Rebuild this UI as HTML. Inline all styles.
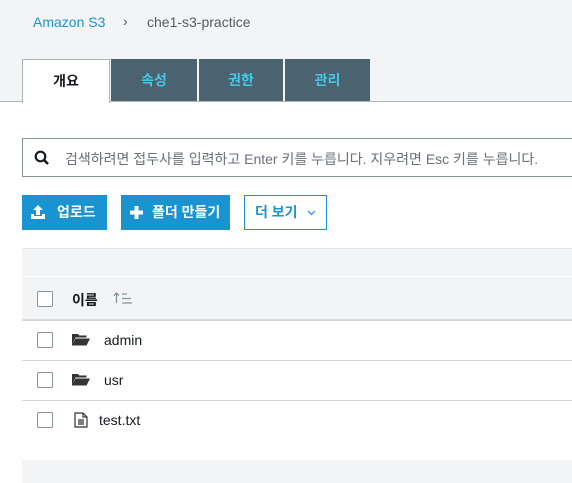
<html><head><style>
body{margin:0;width:572px;height:483px;overflow:hidden;background:#fff;font-family:"Liberation Sans","Noto Sans CJK KR",sans-serif;position:relative}
.a{position:absolute}
.top{left:0;top:0;width:572px;height:101px;background:#f2f4f5;border-bottom:1px solid #aab7b8}
.tab{top:59px;height:42px;background:#4b6270;color:#44c8e8;font-weight:bold;font-size:14px;text-align:center;line-height:42px}
.btn{top:195px;height:35px;background:#1a94d0;color:#fff;font-size:14px;line-height:35px;font-weight:bold}
.cb{width:14px;height:14px;border:1px solid #879596;border-radius:2px;left:37px}
.row{left:22px;width:550px;height:40px;border-bottom:1px solid #d5dbdb}
.t{font-size:14px;color:#16191f}
</style></head><body>
<div class="a top"></div>
<div class="a" style="left:33px;top:14px;font-size:14px;color:#1a94d0">Amazon S3</div>
<div class="a" style="left:123px;top:13px;font-size:14px;color:#545b64">›</div>
<div class="a" style="left:147px;top:14px;font-size:14px;color:#545b64">che1-s3-practice</div>
<div class="a tab" style="left:22px;width:86px;background:#fff;color:#16191f;border:1px solid #aab7b8;border-bottom:none;height:43px">개요</div>
<div class="a tab" style="left:111px;width:86px">속성</div>
<div class="a tab" style="left:199px;width:84px">권한</div>
<div class="a tab" style="left:285px;width:85px">관리</div>
<div class="a" style="left:22px;top:138px;width:560px;height:37px;border:1px solid #879596"></div>
<svg class="a" style="left:34px;top:150px" width="16" height="16"><circle cx="6.5" cy="6.5" r="4.8" fill="none" stroke="#16191f" stroke-width="2.2"/><path d="M10 10l4 4" stroke="#16191f" stroke-width="2.6"/></svg>
<div class="a" style="left:65px;top:149px;font-size:14px;color:#687078">검색하려면 접두사를 입력하고 Enter 키를 누릅니다. 지우려면 Esc 키를 누릅니다.</div>
<div class="a btn" style="left:22px;width:85px"><svg style="position:absolute;left:9px;top:10px" width="14" height="14"><path d="M7 0l5 5h-3v5h-4v-5h-3z M0 9h3v2h8v-2h3v5h-14z" fill="#fff"/></svg><span style="position:absolute;left:35px">업로드</span></div>
<div class="a btn" style="left:121px;width:109px"><svg style="position:absolute;left:9px;top:11px" width="13" height="13"><path d="M4.5 0h4v4.5h4.5v4h-4.5v4.5h-4v-4.5h-4.5v-4h4.5z" fill="#fff"/></svg><span style="position:absolute;left:31px">폴더 만들기</span></div>
<div class="a" style="left:244px;top:195px;width:81px;height:33px;border:1px solid #1a94d0;color:#1a94d0;font-size:14px;line-height:33px;font-weight:bold"><span style="position:absolute;left:10px">더 보기</span><svg style="position:absolute;left:62px;top:14px" width="9" height="6"><path d="M1 1l3.5 3.5 3.5-3.5" fill="none" stroke="#1a94d0" stroke-width="1.2"/></svg></div>
<div class="a" style="left:22px;top:248px;width:550px;height:27px;background:#f2f4f5;border-top:1px solid #e3e6e6"></div>
<div class="a" style="left:22px;top:277px;width:550px;height:42px;background:#f2f4f5;border-bottom:2px solid #d5dbdb"></div>
<div class="a cb" style="top:291px;background:#fff"></div>
<div class="a t" style="left:72px;top:290px;font-weight:bold">이름</div>
<svg class="a" style="left:113px;top:291px" width="22" height="14"><path d="M3.5 12V2 M1 4.5l2.5-2.5 2.5 2.5 M9 3h5 M9 7.5h9 M9 12h10" fill="none" stroke="#879596" stroke-width="1.3"/></svg>
<div class="a row" style="top:320px"></div>
<div class="a row" style="top:360px"></div>
<div class="a cb" style="top:332px"></div>
<div class="a cb" style="top:372px"></div>
<div class="a cb" style="top:412px"></div>
<svg class="a" style="left:72px;top:333px" width="18" height="13"><path d="M0 1h6l1.5 1.5h7v2h-11l-3.5 8z M3.5 5.5h14.5l-3.5 7h-14.5z" fill="#333"/></svg>
<svg class="a" style="left:72px;top:373px" width="18" height="13"><path d="M0 1h6l1.5 1.5h7v2h-11l-3.5 8z M3.5 5.5h14.5l-3.5 7h-14.5z" fill="#333"/></svg>
<svg class="a" style="left:74px;top:412px" width="14" height="16"><path d="M1 1h8l4 4v10h-12z M9 1v4h4 M4 8h6 M4 10h6 M4 12h6" fill="none" stroke="#333" stroke-width="1.2"/></svg>
<div class="a t" style="left:104px;top:332px;color:#16191f">admin</div>
<div class="a t" style="left:104px;top:372px">usr</div>
<div class="a t" style="left:99px;top:412px">test.txt</div>
<div class="a" style="left:22px;top:460px;width:550px;height:23px;background:#f2f4f5"></div>
</body></html>
